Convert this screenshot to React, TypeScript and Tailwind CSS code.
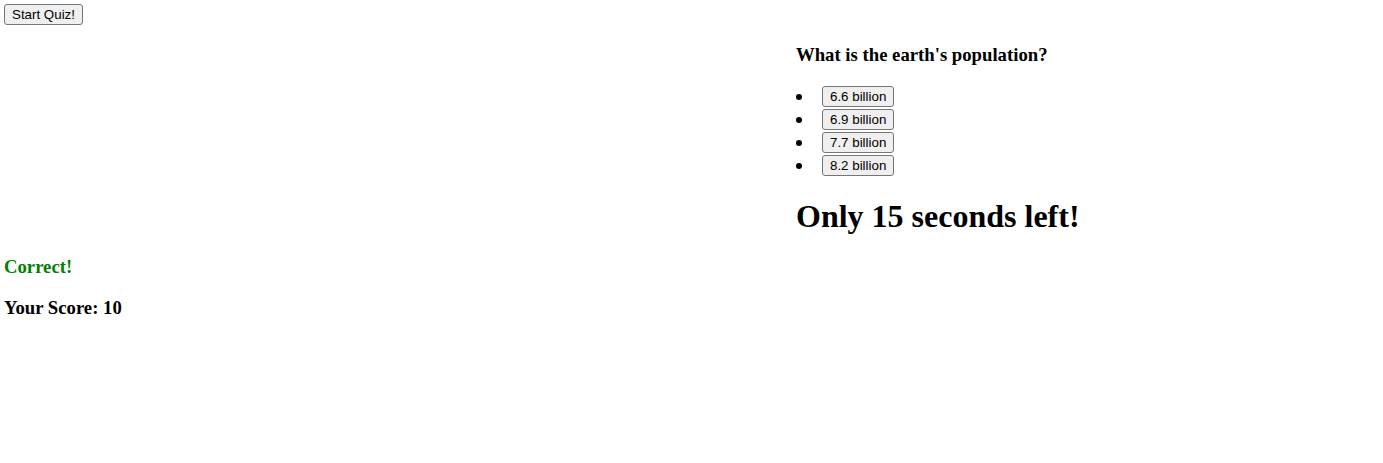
const answers = ["6.6 billion", "6.9 billion", "7.7 billion", "8.2 billion"];

const btn =
  "bg-[#efefef] border border-[#767676] rounded-[3px] px-[7px] py-[2px] text-[13.333px] leading-[normal] text-black font-['Liberation_Sans',Arial,sans-serif]";

export default function App() {
  return (
    <div className="bg-white min-h-[463px] p-[4px] text-black text-[16px] leading-[normal] font-['Liberation_Serif','Times_New_Roman',serif]">
      <button className={btn}>Start Quiz!</button>
      <div className="ml-[792px]">
        <h3 className="text-[18.72px] font-bold my-[18.72px]">What is the earth's population?</h3>
        <ul className="my-[16px]">
          {answers.map((a) => (
            <li key={a} className="flex items-center pt-[2px]">
              <span className="w-[6px] h-[6px] rounded-full bg-black mr-[20px]" />
              <button className={btn}>{a}</button>
            </li>
          ))}
        </ul>
        <h1 className="text-[32px] font-bold my-[21.44px]">Only 15 seconds left!</h1>
      </div>
      <h3 className="text-[18.72px] font-bold my-[18.72px] text-[#008000]">Correct!</h3>
      <h3 className="text-[18.72px] font-bold my-[18.72px]">Your Score: 10</h3>
    </div>
  );
}
